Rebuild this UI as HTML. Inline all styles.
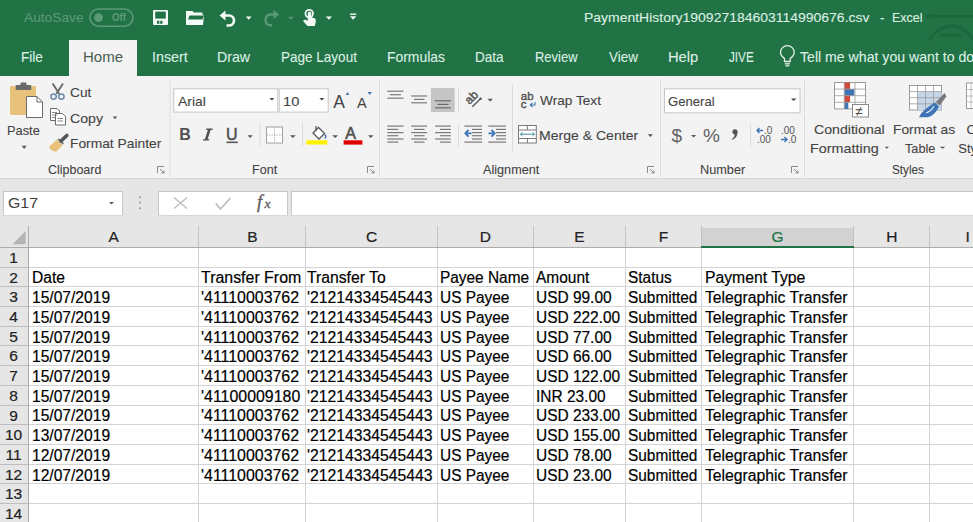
<!DOCTYPE html>
<html><head><meta charset="utf-8">
<style>
html,body{margin:0;padding:0;}
body{width:973px;height:522px;overflow:hidden;position:relative;background:#217346;font-family:"Liberation Sans",sans-serif;}
.a{position:absolute;}
.c{-webkit-text-stroke:0.2px currentColor;}
.r{-webkit-text-stroke:0.1px currentColor;}
.t{position:absolute;white-space:pre;line-height:1;transform-origin:0 0;font-family:"Liberation Sans",sans-serif;}
svg{position:absolute;left:0;top:0;overflow:visible;}
</style></head><body>
<!-- title + tabs green -->
<div class="a" style="left:0;top:0;width:973px;height:76px;background:#217346"></div>
<!-- home tab -->
<div class="a" style="left:69px;top:40px;width:68px;height:36px;background:#f3f3f3"></div>
<!-- ribbon -->
<div class="a" style="left:0;top:76px;width:973px;height:102.5px;background:#f3f3f3"></div>
<div class="a" style="left:0;top:178px;width:973px;height:1px;background:#d6d6d6"></div>
<!-- formula band -->
<div class="a" style="left:0;top:179px;width:973px;height:45px;background:#e6e6e6"></div>
<div class="a" style="left:3px;top:191px;width:117.6px;height:22.5px;background:#fff;border:1px solid #c6c6c6"></div>
<div class="a" style="left:158px;top:191px;width:127.5px;height:22.5px;background:#fff;border:1px solid #c6c6c6"></div>
<div class="a" style="left:291px;top:191px;width:700px;height:22.5px;background:#fff;border:1px solid #c6c6c6"></div>

<svg width="973" height="522" viewBox="0 0 973 522">
<rect x="0" y="215.5" width="973" height="32" fill="#e6e6e6"/>
<rect x="0" y="247.4" width="28.4" height="300" fill="#e6e6e6"/>
<rect x="28.9" y="248" width="973" height="300" fill="#ffffff"/>
<rect x="701.5" y="228" width="152" height="19" fill="#d2d2d2"/>
<line x1="28.4" y1="267.50" x2="973" y2="267.50" stroke="#d4d4d4" stroke-width="1"/>
<line x1="0" y1="267.50" x2="28" y2="267.50" stroke="#bebebe" stroke-width="1"/>
<line x1="28.4" y1="286.50" x2="973" y2="286.50" stroke="#d4d4d4" stroke-width="1"/>
<line x1="0" y1="286.50" x2="28" y2="286.50" stroke="#bebebe" stroke-width="1"/>
<line x1="28.4" y1="306.50" x2="973" y2="306.50" stroke="#d4d4d4" stroke-width="1"/>
<line x1="0" y1="306.50" x2="28" y2="306.50" stroke="#bebebe" stroke-width="1"/>
<line x1="28.4" y1="326.50" x2="973" y2="326.50" stroke="#d4d4d4" stroke-width="1"/>
<line x1="0" y1="326.50" x2="28" y2="326.50" stroke="#bebebe" stroke-width="1"/>
<line x1="28.4" y1="345.50" x2="973" y2="345.50" stroke="#d4d4d4" stroke-width="1"/>
<line x1="0" y1="345.50" x2="28" y2="345.50" stroke="#bebebe" stroke-width="1"/>
<line x1="28.4" y1="365.50" x2="973" y2="365.50" stroke="#d4d4d4" stroke-width="1"/>
<line x1="0" y1="365.50" x2="28" y2="365.50" stroke="#bebebe" stroke-width="1"/>
<line x1="28.4" y1="385.50" x2="973" y2="385.50" stroke="#d4d4d4" stroke-width="1"/>
<line x1="0" y1="385.50" x2="28" y2="385.50" stroke="#bebebe" stroke-width="1"/>
<line x1="28.4" y1="405.50" x2="973" y2="405.50" stroke="#d4d4d4" stroke-width="1"/>
<line x1="0" y1="405.50" x2="28" y2="405.50" stroke="#bebebe" stroke-width="1"/>
<line x1="28.4" y1="424.50" x2="973" y2="424.50" stroke="#d4d4d4" stroke-width="1"/>
<line x1="0" y1="424.50" x2="28" y2="424.50" stroke="#bebebe" stroke-width="1"/>
<line x1="28.4" y1="444.50" x2="973" y2="444.50" stroke="#d4d4d4" stroke-width="1"/>
<line x1="0" y1="444.50" x2="28" y2="444.50" stroke="#bebebe" stroke-width="1"/>
<line x1="28.4" y1="464.50" x2="973" y2="464.50" stroke="#d4d4d4" stroke-width="1"/>
<line x1="0" y1="464.50" x2="28" y2="464.50" stroke="#bebebe" stroke-width="1"/>
<line x1="28.4" y1="483.50" x2="973" y2="483.50" stroke="#d4d4d4" stroke-width="1"/>
<line x1="0" y1="483.50" x2="28" y2="483.50" stroke="#bebebe" stroke-width="1"/>
<line x1="28.4" y1="503.50" x2="973" y2="503.50" stroke="#d4d4d4" stroke-width="1"/>
<line x1="0" y1="503.50" x2="28" y2="503.50" stroke="#bebebe" stroke-width="1"/>
<line x1="28.4" y1="523.50" x2="973" y2="523.50" stroke="#d4d4d4" stroke-width="1"/>
<line x1="0" y1="523.50" x2="28" y2="523.50" stroke="#bebebe" stroke-width="1"/>
<line x1="198.50" y1="247.4" x2="198.50" y2="522" stroke="#d4d4d4" stroke-width="1"/>
<line x1="198.50" y1="226" x2="198.50" y2="247.4" stroke="#c3c3c3" stroke-width="1"/>
<line x1="305.50" y1="247.4" x2="305.50" y2="522" stroke="#d4d4d4" stroke-width="1"/>
<line x1="305.50" y1="226" x2="305.50" y2="247.4" stroke="#c3c3c3" stroke-width="1"/>
<line x1="437.50" y1="247.4" x2="437.50" y2="522" stroke="#d4d4d4" stroke-width="1"/>
<line x1="437.50" y1="226" x2="437.50" y2="247.4" stroke="#c3c3c3" stroke-width="1"/>
<line x1="533.50" y1="247.4" x2="533.50" y2="522" stroke="#d4d4d4" stroke-width="1"/>
<line x1="533.50" y1="226" x2="533.50" y2="247.4" stroke="#c3c3c3" stroke-width="1"/>
<line x1="625.50" y1="247.4" x2="625.50" y2="522" stroke="#d4d4d4" stroke-width="1"/>
<line x1="625.50" y1="226" x2="625.50" y2="247.4" stroke="#c3c3c3" stroke-width="1"/>
<line x1="701.50" y1="247.4" x2="701.50" y2="522" stroke="#d4d4d4" stroke-width="1"/>
<line x1="701.50" y1="226" x2="701.50" y2="247.4" stroke="#c3c3c3" stroke-width="1"/>
<line x1="853.50" y1="247.4" x2="853.50" y2="522" stroke="#d4d4d4" stroke-width="1"/>
<line x1="853.50" y1="226" x2="853.50" y2="247.4" stroke="#c3c3c3" stroke-width="1"/>
<line x1="929.50" y1="247.4" x2="929.50" y2="522" stroke="#d4d4d4" stroke-width="1"/>
<line x1="929.50" y1="226" x2="929.50" y2="247.4" stroke="#c3c3c3" stroke-width="1"/>
<line x1="0" y1="247.5" x2="973" y2="247.5" stroke="#ababab" stroke-width="1"/>
<line x1="28.5" y1="226" x2="28.5" y2="522" stroke="#ababab" stroke-width="1"/>
<line x1="701" y1="247" x2="854" y2="247" stroke="#217346" stroke-width="2"/>
<polygon points="25.7,231 25.7,244.2 12.5,244.2" fill="#b4b4b4"/>
</svg>

<!-- ICONS -->
<svg width="973" height="522" viewBox="0 0 973 522">
<!-- title bar decorative -->
<g stroke="#1b673c" fill="none" opacity="0.9">
  <line x1="930" y1="16.5" x2="980" y2="16.5" stroke-width="3"/>
  <circle cx="929.5" cy="16.5" r="2.8" fill="#1b673c" stroke="none"/>
  <path d="M929 40 Q951 12 975 40" stroke-width="3.2"/>
  <path d="M940 35.3 H961" stroke-width="3.5"/>
</g>
<!-- autosave toggle -->
<rect x="89.9" y="9" width="43" height="17.2" rx="8.6" fill="none" stroke="#5e9a78" stroke-width="1.6"/>
<circle cx="98.6" cy="17.6" r="4.4" fill="#5e9a78"/>
<!-- save -->
<rect x="153" y="10" width="15" height="15" rx="1" fill="#f4faf6"/>
<rect x="155.2" y="11.6" width="10.6" height="7" fill="#217346"/>
<rect x="157" y="20.8" width="5.5" height="3" fill="#217346"/>
<rect x="159.3" y="20.8" width="0.9" height="3" fill="#f4faf6"/>
<!-- folder -->
<path d="M186 11 H192.5 L194 12.5 H202.5 V15 H204 L203 25 H186 Z" fill="#f4faf6"/>
<polygon points="189.5,15.6 204,15.6 202.5,19.6 188,19.6" fill="#217346"/>
<!-- undo -->
<g fill="none" stroke="#f4faf6" stroke-width="2.6">
  <path d="M222 15.5 H229 A5 5 0 0 1 229 25.5 H226.5"/>
</g>
<polygon points="219.5,15.5 225.5,10.5 225.5,20.5" fill="#f4faf6"/>
<polygon points="245.8,16.6 251.6,16.6 248.7,19.7" fill="#f4faf6"/>
<!-- redo faded -->
<g fill="none" stroke="#5a9874" stroke-width="2.4">
  <path d="M276 14.5 H270 A5.5 5.5 0 0 0 270 25.3 H272"/>
</g>
<polygon points="279.2,14.5 273.5,10 273.5,19" fill="#5a9874"/>
<polygon points="288,16.8 293.8,16.8 290.9,19.7" fill="#5a9874"/>
<!-- touch mode -->
<g fill="#f4faf6">
  <circle cx="309.2" cy="13.6" r="3.8" fill="none" stroke="#f4faf6" stroke-width="1.7"/>
  <path d="M307.8 12.5 Q309.5 11 311.2 12.5 V17.5 L314 18 Q316.2 18.6 315.8 21.5 L314.8 26 H307.5 L303.2 21.2 Q303.3 19.2 305.6 19.8 L307.8 21 Z"/>
</g>
<polygon points="325.8,16.6 332,16.6 328.9,19.7" fill="#f4faf6"/>
<rect x="350" y="13.5" width="6.3" height="1.4" fill="#f4faf6"/>
<polygon points="350,16.3 356.3,16.3 353.15,19.7" fill="#f4faf6"/>

<!-- lightbulb -->
<g fill="none" stroke="#e4efe8" stroke-width="1.3">
  <path d="M784.5 61.5 V58.5 Q780.5 55.5 780.5 52.5 A6.8 6.8 0 0 1 794.2 52.5 Q794.2 55.5 790.2 58.5 V61.5 Z"/>
  <line x1="784.8" y1="63.8" x2="790" y2="63.8"/>
  <line x1="785.5" y1="65.8" x2="789.3" y2="65.8"/>
</g>

<!-- group separators -->
<g fill="#dcdcdc">
  <rect x="169.5" y="79" width="1" height="98"/>
  <rect x="379" y="79" width="1" height="98"/>
  <rect x="660" y="79" width="1" height="98"/>
  <rect x="804" y="79" width="1" height="98"/>
</g>
<!-- dialog launchers -->
<g fill="none" stroke="#8a8a8a" stroke-width="1">
  <path d="M157.5 173 V166.5 H164"/><path d="M160 169 L164 173 M164 170.5 V173 H161.5"/>
  <path d="M367.5 173 V166.5 H374"/><path d="M370 169 L374 173 M374 170.5 V173 H371.5"/>
  <path d="M647.5 173 V166.5 H654"/><path d="M650 169 L654 173 M654 170.5 V173 H651.5"/>
  <path d="M791.5 173 V166.5 H798"/><path d="M794 169 L798 173 M798 170.5 V173 H795.5"/>
</g>

<!-- paste -->
<rect x="10" y="86" width="26" height="29" rx="1" fill="#e8c17a"/>
<rect x="15.7" y="85" width="15.5" height="5" fill="#6b6b6b"/>
<rect x="20.5" y="82.5" width="6" height="4" rx="1" fill="#6b6b6b"/>
<path d="M26.5 96.5 H37 L42.5 102 V117.5 H26.5 Z" fill="#fff" stroke="#6b6b6b" stroke-width="1"/>
<path d="M37 96.5 V102 H42.5" fill="none" stroke="#6b6b6b" stroke-width="1"/>
<polygon points="21.7,145.8 26.6,145.8 24.15,149" fill="#555"/>
<!-- scissors -->
<g fill="none">
  <path d="M52.6 83.5 L59.2 93.8 M63 83.5 L56.4 93.8" stroke="#666" stroke-width="1.8"/>
  <circle cx="53.6" cy="96.6" r="2.7" stroke="#6a88aa" stroke-width="1.5"/><circle cx="61.4" cy="96.6" r="2.7" stroke="#6a88aa" stroke-width="1.5"/>
</g>
<!-- copy -->
<g fill="#fff" stroke="#6b6b6b" stroke-width="1">
  <path d="M50.5 108.5 H57 L59.5 111 V120.5 H50.5 Z"/>
  <path d="M55.5 113.5 H62.5 L65.5 116.5 V125 H55.5 Z"/>
  <path d="M52 112.5 H57 M52 115 H57 M52 117.5 H55 M57.5 118.5 H63 M57.5 121 H63" stroke-width="0.8"/>
</g>
<polygon points="112.7,116.6 117.2,116.6 114.95,119.3" fill="#555"/>
<!-- format painter -->
<path d="M56.8 139.8 L62.5 145.5 L56 151.8 Q52 151 49.5 148.5 Q49 146.5 50 145.8 Z" fill="#e8c17a"/>
<path d="M57.5 139.5 L62.8 144.8 L64 143.3 L58.8 138.2 Z" fill="#777"/>
<path d="M61 141 L66.8 135.5" stroke="#555" stroke-width="3.6" stroke-linecap="round"/>

<!-- font combos -->
<rect x="173.8" y="88.8" width="104" height="23.3" fill="#fff" stroke="#c6c6c6" stroke-width="1"/>
<rect x="279.2" y="88.8" width="49" height="23.3" fill="#fff" stroke="#c6c6c6" stroke-width="1"/>
<polygon points="269.5,98 274.3,98 271.9,100.6" fill="#444"/>
<polygon points="319.4,98 324.3,98 321.85,100.6" fill="#444"/>
<!-- grow / shrink font -->
<text x="333.2" y="107.8" font-size="17.5" fill="#444" font-family="Liberation Sans">A</text>
<polygon points="345.5,95 349.5,95 347.5,92" fill="#4a7bb0"/>
<text x="357" y="107.8" font-size="14.5" fill="#444" font-family="Liberation Sans">A</text>
<polygon points="367.5,92 372,92 369.75,95" fill="#4a7bb0"/>
<!-- B I U -->
<text x="179.3" y="140.4" font-size="16" font-weight="bold" fill="#505050" font-family="Liberation Sans">B</text>
<path d="M206.5 128.6 H212.8 L212.4 130 H210.6 L207.6 139.3 H209.4 L209 140.6 H202.7 L203.1 139.3 H204.9 L207.9 130 H206.1 Z" fill="#505050"/>
<text x="226" y="139.8" font-size="16" fill="#505050" font-family="Liberation Sans" stroke="#505050" stroke-width="0.5">U</text>
<rect x="226.5" y="141.6" width="11.3" height="1.5" fill="#505050"/>
<polygon points="247.5,135.2 252.7,135.2 250.1,138" fill="#555"/>
<rect x="259.3" y="123.6" width="1" height="22.5" fill="#dadada"/>
<!-- borders -->
<rect x="266.5" y="127" width="16" height="16" fill="#fff" stroke="#a0a0a0" stroke-width="1"/>
<path d="M274.5 127 V143 M266.5 135 H282.5" stroke="#b0b0b0" stroke-width="1" stroke-dasharray="1.5 1"/>
<polygon points="290,135.2 295.7,135.2 292.85,138" fill="#555"/>
<rect x="302" y="123.6" width="1" height="22.5" fill="#dadada"/>
<!-- fill color -->
<path d="M313 133 L318.5 127.5 L324.5 133.5 L319 139 Z" fill="#fff" stroke="#555" stroke-width="1.3"/>
<path d="M316 126 V131" stroke="#555" stroke-width="1.3"/>
<path d="M325 134.5 Q326.5 137 325 138.5" stroke="#4a7bb0" stroke-width="1.5" fill="none"/>
<rect x="306.3" y="140.3" width="21" height="4.2" fill="#fff200"/>
<polygon points="332.3,135.2 338,135.2 335.15,138" fill="#555"/>
<!-- font color -->
<text x="345.3" y="139" font-size="16" fill="#505050" font-family="Liberation Sans" stroke="#505050" stroke-width="0.6">A</text>
<rect x="343.6" y="140.3" width="18.8" height="4.3" fill="#e00000"/>
<polygon points="368,135.2 373.5,135.2 370.75,138" fill="#555"/>

<!-- alignment row 1 -->
<g fill="#7a7a7a">
  <rect x="387.3" y="90.6" width="16.2" height="1.2"/><rect x="390" y="94.1" width="11" height="1.2"/><rect x="387.3" y="97.6" width="16.2" height="1.2"/>
  <rect x="411.2" y="95.4" width="15.9" height="1.2"/><rect x="414" y="98.8" width="10.5" height="1.2"/><rect x="411.2" y="102.2" width="15.9" height="1.2"/>
</g>
<rect x="430.8" y="88" width="23.9" height="24" fill="#c5c5c5"/>
<g fill="#6a6a6a">
  <rect x="435" y="100.2" width="15.8" height="1.2"/><rect x="437.5" y="103.8" width="11" height="1.2"/><rect x="435" y="107.2" width="15.8" height="1.2"/>
</g>
<rect x="458" y="88" width="1" height="24" fill="#dadada"/>
<g>
  <text x="0" y="0" font-size="12" fill="#555" font-family="Liberation Sans" stroke="#555" stroke-width="0.45" transform="translate(469.5,105) rotate(-45)">ab</text>
  <path d="M472.3 106.8 L480 99.2" stroke="#555" stroke-width="1.3"/>
  <circle cx="480.6" cy="98.8" r="1.3" fill="#555"/>
</g>
<polygon points="487.5,98.8 493,98.8 490.25,101.6" fill="#555"/>
<rect x="512" y="84.6" width="1" height="66.5" fill="#dadada"/>
<!-- alignment row 2 -->
<g fill="#7a7a7a">
  <rect x="387.3" y="125.5" width="16.2" height="1.2"/><rect x="387.3" y="128.8" width="11" height="1.2"/><rect x="387.3" y="132" width="16.2" height="1.2"/><rect x="387.3" y="135.1" width="11" height="1.2"/><rect x="387.3" y="138.4" width="16.2" height="1.2"/><rect x="387.3" y="141.5" width="11" height="1.2"/>
  <rect x="411.2" y="125.5" width="15.9" height="1.2"/><rect x="414" y="128.8" width="10.5" height="1.2"/><rect x="411.2" y="132" width="15.9" height="1.2"/><rect x="414" y="135.1" width="10.5" height="1.2"/><rect x="411.2" y="138.4" width="15.9" height="1.2"/><rect x="414" y="141.5" width="10.5" height="1.2"/>
  <rect x="435.1" y="125.5" width="15.7" height="1.2"/><rect x="440" y="128.8" width="10.8" height="1.2"/><rect x="435.1" y="132" width="15.7" height="1.2"/><rect x="440" y="135.1" width="10.8" height="1.2"/><rect x="435.1" y="138.4" width="15.7" height="1.2"/><rect x="440" y="141.5" width="10.8" height="1.2"/>
</g>
<rect x="458" y="124.7" width="1" height="21.6" fill="#dadada"/>
<g fill="#7a7a7a">
  <rect x="464.4" y="125.5" width="17.7" height="1.2"/><rect x="472" y="128.8" width="10" height="1.2"/><rect x="472" y="132" width="10" height="1.2"/><rect x="472" y="135.1" width="10" height="1.2"/><rect x="472" y="138.4" width="10" height="1.2"/><rect x="464.4" y="141.5" width="17.7" height="1.2"/>
  <rect x="488.3" y="125.5" width="17.7" height="1.2"/><rect x="496" y="128.8" width="10" height="1.2"/><rect x="496" y="132" width="10" height="1.2"/><rect x="496" y="135.1" width="10" height="1.2"/><rect x="496" y="138.4" width="10" height="1.2"/><rect x="488.3" y="141.5" width="17.7" height="1.2"/>
</g>
<g fill="none" stroke="#3f74b5" stroke-width="1.8">
  <path d="M465.5 133.3 H471.5 M468.5 130 L465.3 133.3 L468.5 136.6"/>
  <path d="M488.5 133.3 H494.5 M491.5 130 L494.7 133.3 L491.5 136.6"/>
</g>
<!-- wrap text icon -->
<text x="520.8" y="100" font-size="11.5" fill="#555" font-family="Liberation Sans" stroke="#555" stroke-width="0.4">ab</text>
<text x="520.8" y="107.8" font-size="11.5" fill="#555" font-family="Liberation Sans" stroke="#555" stroke-width="0.4">c</text>
<path d="M535 102 V105 H530.5 M532.5 103 L530.3 105 L532.5 107" fill="none" stroke="#4a7bb0" stroke-width="1.2"/>
<!-- merge icon -->
<rect x="518.5" y="125.5" width="17.8" height="17.5" fill="#fff" stroke="#7a7a7a" stroke-width="1"/>
<path d="M518.5 130 H536.3 M518.5 138.5 H536.3 M527.4 125.5 V130 M527.4 138.5 V143" stroke="#7a7a7a" stroke-width="1"/>
<path d="M520.5 134.2 H534.5 M522.5 132.5 L520.5 134.2 L522.5 136 M532.5 132.5 L534.5 134.2 L532.5 136" fill="none" stroke="#3f8a9a" stroke-width="1"/>
<polygon points="647.7,134.2 652.9,134.2 650.3,136.9" fill="#555"/>

<!-- number group -->
<rect x="664.5" y="88.8" width="135.5" height="24" fill="#fff" stroke="#c6c6c6" stroke-width="1"/>
<polygon points="791,98.5 796.4,98.5 793.7,101" fill="#444"/>
<text x="671.5" y="141.5" font-size="19" fill="#606060" font-family="Liberation Sans">$</text>
<polygon points="691,135 696.2,135 693.6,137.6" fill="#555"/>
<text x="703" y="142.3" font-size="19" fill="#606060" font-family="Liberation Sans">%</text>
<circle cx="735" cy="131.8" r="2.6" fill="#555"/><path d="M737.3 132 Q737.8 137.5 732.2 139.8 L731.8 139 Q734.8 137 734.8 133.5 Z" fill="#555"/>
<rect x="750" y="124" width="1" height="23" fill="#dadada"/>
<text x="764" y="133.6" font-size="10" fill="#555" font-family="Liberation Sans">.0</text>
<text x="757" y="143.2" font-size="10" fill="#555" font-family="Liberation Sans">.00</text>
<path d="M757 130.5 H763 M759.5 128 L757 130.5 L759.5 133" fill="none" stroke="#3f74b5" stroke-width="1.4"/>
<text x="781" y="133.6" font-size="10" fill="#555" font-family="Liberation Sans">.00</text>
<text x="788" y="143.2" font-size="10" fill="#555" font-family="Liberation Sans">.0</text>
<path d="M781 139.5 H787 M784.5 137 L787 139.5 L784.5 142" fill="none" stroke="#3f74b5" stroke-width="1.4"/>

<!-- conditional formatting -->
<g>
  <rect x="834.5" y="82.5" width="31" height="26.4" fill="#fff" stroke="#9a9a9a" stroke-width="1"/>
  <rect x="844.3" y="82.5" width="5.8" height="6.6" fill="#d04a3a"/>
  <rect x="844.3" y="89.1" width="10" height="6.6" fill="#3f74b5"/>
  <rect x="844.3" y="95.7" width="5.8" height="6.6" fill="#d04a3a"/>
  <rect x="844.3" y="102.3" width="4" height="6.6" fill="#3f74b5"/>
  <path d="M834.5 89.1 H865.5 M834.5 95.7 H865.5 M834.5 102.3 H865.5 M844.3 82.5 V108.9 M855 82.5 V108.9" stroke="#9a9a9a" stroke-width="0.8" fill="none"/>
  <rect x="852.5" y="104.5" width="16" height="12.5" fill="#fff" stroke="#8a8a8a" stroke-width="1"/>
  <text x="855.2" y="115.5" font-size="13.5" fill="#444" font-family="Liberation Sans">≠</text>
</g>
<polygon points="884.7,146.8 889,146.8 886.85,148.7" fill="#555"/>
<!-- format as table -->
<g>
  <rect x="909.5" y="85.5" width="32" height="24.5" fill="#fff" stroke="#9a9a9a" stroke-width="1"/>
  <rect x="917.5" y="91.6" width="24" height="18.4" fill="#c6d7ea"/>
  <path d="M909.5 91.6 H941.5 M909.5 97.7 H941.5 M909.5 103.8 H941.5 M917.5 85.5 V110 M925.5 85.5 V110 M933.5 85.5 V110" stroke="#9a9a9a" stroke-width="0.8" fill="none"/>
  <path d="M944.5 93 L936 102 L939.5 105.5 L946.5 96.5 Z" fill="#7a7a7a"/>
  <path d="M935 102.5 L939 106.5 Q935.5 115 928 117.2 L919 117.2 Q922 110 935 102.5 Z" fill="#3f74b5"/>
  <path d="M934 106 Q931.5 111 926 113" stroke="#dfe8f3" stroke-width="1.2" fill="none"/>
</g>
<polygon points="939.8,146.8 945.3,146.8 942.55,148.8" fill="#555"/>
<!-- cell styles partial -->
<rect x="966.5" y="83" width="12" height="25.5" fill="#fff" stroke="#9a9a9a" stroke-width="1"/>
<path d="M966.5 89.5 H973 M966.5 96 H973 M966.5 102 H973 M971 83 V108.5" stroke="#b0b0b0" stroke-width="0.8"/>

<!-- formula bar bits -->
<polygon points="109,202 114,202 111.5,204.6" fill="#555"/>
<g fill="#9a9a9a"><circle cx="140" cy="197.2" r="1"/><circle cx="140" cy="202.6" r="1"/><circle cx="140" cy="208.2" r="1"/></g>
<path d="M174 197.5 L187 208.5 M187 197.5 L174 208.5" stroke="#bdbdbd" stroke-width="1.4"/>
<path d="M215.8 203.5 L220.5 209 L230.5 198" stroke="#bdbdbd" stroke-width="1.8" fill="none"/>
<text x="257" y="207.5" font-size="18.5" font-style="italic" fill="#5a5a5a" font-family="Liberation Serif" stroke="#5a5a5a" stroke-width="0.3">f</text>
<text x="264.5" y="207.5" font-size="13.5" font-style="italic" fill="#5a5a5a" font-family="Liberation Serif" stroke="#5a5a5a" stroke-width="0.3">x</text>
</svg>

<span class="t" style="left:24.20px;top:11.27px;font-size:13.5px;color:#5e9a78;transform:scaleX(1.0172);">AutoSave</span>
<span class="t" style="left:112.00px;top:12.93px;font-size:10px;color:#5e9a78;transform:scaleX(0.9733);font-weight:700;">Off</span>
<span class="t r" style="left:584.23px;top:11.30px;font-size:13px;color:#ddefe3;transform:scaleX(1.0743);">PaymentHistory190927184603114990676.csv</span>
<span class="t r" style="left:880.00px;top:11.30px;font-size:13px;color:#ddefe3;">-</span>
<span class="t r" style="left:892.24px;top:11.30px;font-size:13px;color:#ddefe3;transform:scaleX(0.9600);">Excel</span>
<span class="t r" style="left:21.26px;top:50.03px;font-size:14.5px;color:#ddefe3;transform:scaleX(0.9364);">File</span>
<span class="t r" style="left:152.01px;top:50.03px;font-size:14.5px;color:#ddefe3;transform:scaleX(0.9857);">Insert</span>
<span class="t r" style="left:217.32px;top:50.03px;font-size:14.5px;color:#ddefe3;transform:scaleX(0.9758);">Draw</span>
<span class="t r" style="left:280.57px;top:50.03px;font-size:14.5px;color:#ddefe3;transform:scaleX(0.9321);">Page Layout</span>
<span class="t r" style="left:387.24px;top:50.03px;font-size:14.5px;color:#ddefe3;transform:scaleX(0.9593);">Formulas</span>
<span class="t r" style="left:475.47px;top:50.03px;font-size:14.5px;color:#ddefe3;transform:scaleX(0.9333);">Data</span>
<span class="t r" style="left:535.41px;top:50.03px;font-size:14.5px;color:#ddefe3;transform:scaleX(0.8936);">Review</span>
<span class="t r" style="left:609.20px;top:50.03px;font-size:14.5px;color:#ddefe3;transform:scaleX(0.9258);">View</span>
<span class="t r" style="left:668.09px;top:50.03px;font-size:14.5px;color:#ddefe3;transform:scaleX(1.0143);">Help</span>
<span class="t r" style="left:728.70px;top:50.03px;font-size:14.5px;color:#ddefe3;transform:scaleX(0.8067);">JIVE</span>
<span class="t" style="left:82.86px;top:50.03px;font-size:14.5px;color:#4a5e52;transform:scaleX(1.0378);">Home</span>
<span class="t r" style="left:800.00px;top:49.93px;font-size:14.5px;color:#ddefe3;transform:scaleX(0.9730);">Tell me what you want to do</span>
<span class="t r" style="left:6.61px;top:123.70px;font-size:13px;color:#444444;transform:scaleX(0.9875);">Paste</span>
<span class="t r" style="left:70.40px;top:85.70px;font-size:13px;color:#444444;transform:scaleX(1.0550);">Cut</span>
<span class="t r" style="left:70.40px;top:111.90px;font-size:13px;color:#444444;transform:scaleX(1.0867);">Copy</span>
<span class="t r" style="left:69.74px;top:137.40px;font-size:13px;color:#444444;transform:scaleX(1.0612);">Format Painter</span>
<span class="t r" style="left:47.90px;top:162.60px;font-size:13px;color:#444444;transform:scaleX(0.9582);">Clipboard</span>
<span class="t r" style="left:177.90px;top:95.20px;font-size:13px;color:#444444;transform:scaleX(1.0680);">Arial</span>
<span class="t r" style="left:282.57px;top:95.20px;font-size:13px;color:#444444;transform:scaleX(1.1308);">10</span>
<span class="t r" style="left:252.23px;top:162.80px;font-size:13px;color:#444444;transform:scaleX(0.9680);">Font</span>
<span class="t r" style="left:539.90px;top:93.90px;font-size:13px;color:#444444;transform:scaleX(1.0500);">Wrap Text</span>
<span class="t r" style="left:539.32px;top:128.80px;font-size:13px;color:#444444;transform:scaleX(1.0802);">Merge &amp; Center</span>
<span class="t r" style="left:482.50px;top:162.80px;font-size:13px;color:#444444;transform:scaleX(0.9741);">Alignment</span>
<span class="t r" style="left:668.00px;top:94.90px;font-size:13px;color:#444444;transform:scaleX(1.0087);">General</span>
<span class="t r" style="left:700.02px;top:162.50px;font-size:13px;color:#444444;transform:scaleX(0.9778);">Number</span>
<span class="t r" style="left:814.40px;top:123.00px;font-size:13px;color:#444444;transform:scaleX(1.0877);">Conditional</span>
<span class="t r" style="left:809.80px;top:142.20px;font-size:13px;color:#444444;transform:scaleX(1.1049);">Formatting</span>
<span class="t r" style="left:893.44px;top:123.00px;font-size:13px;color:#444444;transform:scaleX(1.0614);">Format as</span>
<span class="t r" style="left:904.60px;top:142.20px;font-size:13px;color:#444444;transform:scaleX(0.9774);">Table</span>
<span class="t r" style="left:891.60px;top:162.70px;font-size:13px;color:#444444;transform:scaleX(0.9029);">Styles</span>
<span class="t r" style="left:966.50px;top:123.00px;font-size:13px;color:#444444;">C</span>
<span class="t r" style="left:958.30px;top:142.20px;font-size:13px;color:#444444;">Sty</span>
<span class="t" style="left:7.74px;top:195.30px;font-size:15px;color:#404040;transform:scaleX(1.0593);">G17</span>
<span class="t c" style="left:31.90px;top:270.38px;font-size:16px;color:#000;transform:scaleX(0.9750);">Date</span>
<span class="t c" style="left:200.80px;top:270.38px;font-size:16px;color:#000;transform:scaleX(0.9950);">Transfer From</span>
<span class="t c" style="left:307.20px;top:270.38px;font-size:16px;color:#000;transform:scaleX(0.9830);">Transfer To</span>
<span class="t c" style="left:440.00px;top:270.38px;font-size:16px;color:#000;transform:scaleX(0.9630);">Payee Name</span>
<span class="t c" style="left:535.90px;top:270.38px;font-size:16px;color:#000;transform:scaleX(0.9660);">Amount</span>
<span class="t c" style="left:627.90px;top:270.38px;font-size:16px;color:#000;transform:scaleX(0.9630);">Status</span>
<span class="t c" style="left:704.80px;top:270.38px;font-size:16px;color:#000;transform:scaleX(0.9830);">Payment Type</span>
<span class="t c" style="left:31.90px;top:290.10px;font-size:16px;color:#000;transform:scaleX(0.9750);">15/07/2019</span>
<span class="t c" style="left:200.80px;top:290.10px;font-size:16px;color:#000;transform:scaleX(0.9950);">'41110003762</span>
<span class="t c" style="left:307.20px;top:290.10px;font-size:16px;color:#000;transform:scaleX(0.9830);">'21214334545443</span>
<span class="t c" style="left:440.00px;top:290.10px;font-size:16px;color:#000;transform:scaleX(0.9630);">US Payee</span>
<span class="t c" style="left:535.90px;top:290.10px;font-size:16px;color:#000;transform:scaleX(0.9660);">USD 99.00</span>
<span class="t c" style="left:627.90px;top:290.10px;font-size:16px;color:#000;transform:scaleX(0.9630);">Submitted</span>
<span class="t c" style="left:704.80px;top:290.10px;font-size:16px;color:#000;transform:scaleX(0.9830);">Telegraphic Transfer</span>
<span class="t c" style="left:31.90px;top:309.82px;font-size:16px;color:#000;transform:scaleX(0.9750);">15/07/2019</span>
<span class="t c" style="left:200.80px;top:309.82px;font-size:16px;color:#000;transform:scaleX(0.9950);">'41110003762</span>
<span class="t c" style="left:307.20px;top:309.82px;font-size:16px;color:#000;transform:scaleX(0.9830);">'21214334545443</span>
<span class="t c" style="left:440.00px;top:309.82px;font-size:16px;color:#000;transform:scaleX(0.9630);">US Payee</span>
<span class="t c" style="left:535.90px;top:309.82px;font-size:16px;color:#000;transform:scaleX(0.9660);">USD 222.00</span>
<span class="t c" style="left:627.90px;top:309.82px;font-size:16px;color:#000;transform:scaleX(0.9630);">Submitted</span>
<span class="t c" style="left:704.80px;top:309.82px;font-size:16px;color:#000;transform:scaleX(0.9830);">Telegraphic Transfer</span>
<span class="t c" style="left:31.90px;top:329.54px;font-size:16px;color:#000;transform:scaleX(0.9750);">15/07/2019</span>
<span class="t c" style="left:200.80px;top:329.54px;font-size:16px;color:#000;transform:scaleX(0.9950);">'41110003762</span>
<span class="t c" style="left:307.20px;top:329.54px;font-size:16px;color:#000;transform:scaleX(0.9830);">'21214334545443</span>
<span class="t c" style="left:440.00px;top:329.54px;font-size:16px;color:#000;transform:scaleX(0.9630);">US Payee</span>
<span class="t c" style="left:535.90px;top:329.54px;font-size:16px;color:#000;transform:scaleX(0.9660);">USD 77.00</span>
<span class="t c" style="left:627.90px;top:329.54px;font-size:16px;color:#000;transform:scaleX(0.9630);">Submitted</span>
<span class="t c" style="left:704.80px;top:329.54px;font-size:16px;color:#000;transform:scaleX(0.9830);">Telegraphic Transfer</span>
<span class="t c" style="left:31.90px;top:349.26px;font-size:16px;color:#000;transform:scaleX(0.9750);">15/07/2019</span>
<span class="t c" style="left:200.80px;top:349.26px;font-size:16px;color:#000;transform:scaleX(0.9950);">'41110003762</span>
<span class="t c" style="left:307.20px;top:349.26px;font-size:16px;color:#000;transform:scaleX(0.9830);">'21214334545443</span>
<span class="t c" style="left:440.00px;top:349.26px;font-size:16px;color:#000;transform:scaleX(0.9630);">US Payee</span>
<span class="t c" style="left:535.90px;top:349.26px;font-size:16px;color:#000;transform:scaleX(0.9660);">USD 66.00</span>
<span class="t c" style="left:627.90px;top:349.26px;font-size:16px;color:#000;transform:scaleX(0.9630);">Submitted</span>
<span class="t c" style="left:704.80px;top:349.26px;font-size:16px;color:#000;transform:scaleX(0.9830);">Telegraphic Transfer</span>
<span class="t c" style="left:31.90px;top:368.98px;font-size:16px;color:#000;transform:scaleX(0.9750);">15/07/2019</span>
<span class="t c" style="left:200.80px;top:368.98px;font-size:16px;color:#000;transform:scaleX(0.9950);">'41110003762</span>
<span class="t c" style="left:307.20px;top:368.98px;font-size:16px;color:#000;transform:scaleX(0.9830);">'21214334545443</span>
<span class="t c" style="left:440.00px;top:368.98px;font-size:16px;color:#000;transform:scaleX(0.9630);">US Payee</span>
<span class="t c" style="left:535.90px;top:368.98px;font-size:16px;color:#000;transform:scaleX(0.9660);">USD 122.00</span>
<span class="t c" style="left:627.90px;top:368.98px;font-size:16px;color:#000;transform:scaleX(0.9630);">Submitted</span>
<span class="t c" style="left:704.80px;top:368.98px;font-size:16px;color:#000;transform:scaleX(0.9830);">Telegraphic Transfer</span>
<span class="t c" style="left:31.90px;top:388.70px;font-size:16px;color:#000;transform:scaleX(0.9750);">15/07/2019</span>
<span class="t c" style="left:200.80px;top:388.70px;font-size:16px;color:#000;transform:scaleX(0.9950);">'41100009180</span>
<span class="t c" style="left:307.20px;top:388.70px;font-size:16px;color:#000;transform:scaleX(0.9830);">'21214334545443</span>
<span class="t c" style="left:440.00px;top:388.70px;font-size:16px;color:#000;transform:scaleX(0.9630);">US Payee</span>
<span class="t c" style="left:535.90px;top:388.70px;font-size:16px;color:#000;transform:scaleX(0.9660);">INR 23.00</span>
<span class="t c" style="left:627.90px;top:388.70px;font-size:16px;color:#000;transform:scaleX(0.9630);">Submitted</span>
<span class="t c" style="left:704.80px;top:388.70px;font-size:16px;color:#000;transform:scaleX(0.9830);">Telegraphic Transfer</span>
<span class="t c" style="left:31.90px;top:408.42px;font-size:16px;color:#000;transform:scaleX(0.9750);">15/07/2019</span>
<span class="t c" style="left:200.80px;top:408.42px;font-size:16px;color:#000;transform:scaleX(0.9950);">'41110003762</span>
<span class="t c" style="left:307.20px;top:408.42px;font-size:16px;color:#000;transform:scaleX(0.9830);">'21214334545443</span>
<span class="t c" style="left:440.00px;top:408.42px;font-size:16px;color:#000;transform:scaleX(0.9630);">US Payee</span>
<span class="t c" style="left:535.90px;top:408.42px;font-size:16px;color:#000;transform:scaleX(0.9660);">USD 233.00</span>
<span class="t c" style="left:627.90px;top:408.42px;font-size:16px;color:#000;transform:scaleX(0.9630);">Submitted</span>
<span class="t c" style="left:704.80px;top:408.42px;font-size:16px;color:#000;transform:scaleX(0.9830);">Telegraphic Transfer</span>
<span class="t c" style="left:31.90px;top:428.14px;font-size:16px;color:#000;transform:scaleX(0.9750);">13/07/2019</span>
<span class="t c" style="left:200.80px;top:428.14px;font-size:16px;color:#000;transform:scaleX(0.9950);">'41110003762</span>
<span class="t c" style="left:307.20px;top:428.14px;font-size:16px;color:#000;transform:scaleX(0.9830);">'21214334545443</span>
<span class="t c" style="left:440.00px;top:428.14px;font-size:16px;color:#000;transform:scaleX(0.9630);">US Payee</span>
<span class="t c" style="left:535.90px;top:428.14px;font-size:16px;color:#000;transform:scaleX(0.9660);">USD 155.00</span>
<span class="t c" style="left:627.90px;top:428.14px;font-size:16px;color:#000;transform:scaleX(0.9630);">Submitted</span>
<span class="t c" style="left:704.80px;top:428.14px;font-size:16px;color:#000;transform:scaleX(0.9830);">Telegraphic Transfer</span>
<span class="t c" style="left:31.90px;top:447.86px;font-size:16px;color:#000;transform:scaleX(0.9750);">12/07/2019</span>
<span class="t c" style="left:200.80px;top:447.86px;font-size:16px;color:#000;transform:scaleX(0.9950);">'41110003762</span>
<span class="t c" style="left:307.20px;top:447.86px;font-size:16px;color:#000;transform:scaleX(0.9830);">'21214334545443</span>
<span class="t c" style="left:440.00px;top:447.86px;font-size:16px;color:#000;transform:scaleX(0.9630);">US Payee</span>
<span class="t c" style="left:535.90px;top:447.86px;font-size:16px;color:#000;transform:scaleX(0.9660);">USD 78.00</span>
<span class="t c" style="left:627.90px;top:447.86px;font-size:16px;color:#000;transform:scaleX(0.9630);">Submitted</span>
<span class="t c" style="left:704.80px;top:447.86px;font-size:16px;color:#000;transform:scaleX(0.9830);">Telegraphic Transfer</span>
<span class="t c" style="left:31.90px;top:467.58px;font-size:16px;color:#000;transform:scaleX(0.9750);">12/07/2019</span>
<span class="t c" style="left:200.80px;top:467.58px;font-size:16px;color:#000;transform:scaleX(0.9950);">'41110003762</span>
<span class="t c" style="left:307.20px;top:467.58px;font-size:16px;color:#000;transform:scaleX(0.9830);">'21214334545443</span>
<span class="t c" style="left:440.00px;top:467.58px;font-size:16px;color:#000;transform:scaleX(0.9630);">US Payee</span>
<span class="t c" style="left:535.90px;top:467.58px;font-size:16px;color:#000;transform:scaleX(0.9660);">USD 23.00</span>
<span class="t c" style="left:627.90px;top:467.58px;font-size:16px;color:#000;transform:scaleX(0.9630);">Submitted</span>
<span class="t c" style="left:704.80px;top:467.58px;font-size:16px;color:#000;transform:scaleX(0.9830);">Telegraphic Transfer</span>
<span class="t c" style="left:108.53px;top:229.38px;font-size:15.5px;color:#222;">A</span>
<span class="t c" style="left:247.18px;top:229.38px;font-size:15.5px;color:#222;">B</span>
<span class="t c" style="left:365.95px;top:229.38px;font-size:15.5px;color:#222;">C</span>
<span class="t c" style="left:479.85px;top:229.38px;font-size:15.5px;color:#222;">D</span>
<span class="t c" style="left:574.23px;top:229.38px;font-size:15.5px;color:#222;">E</span>
<span class="t c" style="left:658.67px;top:229.38px;font-size:15.5px;color:#222;">F</span>
<span class="t c" style="left:771.62px;top:229.38px;font-size:15.5px;color:#217346;">G</span>
<span class="t c" style="left:886.15px;top:229.38px;font-size:15.5px;color:#222;">H</span>
<span class="t c" style="left:965.45px;top:229.38px;font-size:15.5px;color:#222;">I</span>
<span class="t c" style="left:9.29px;top:249.78px;font-size:15.5px;color:#222;">1</span>
<span class="t c" style="left:9.29px;top:269.50px;font-size:15.5px;color:#222;">2</span>
<span class="t c" style="left:9.29px;top:289.22px;font-size:15.5px;color:#222;">3</span>
<span class="t c" style="left:9.29px;top:308.94px;font-size:15.5px;color:#222;">4</span>
<span class="t c" style="left:9.29px;top:328.66px;font-size:15.5px;color:#222;">5</span>
<span class="t c" style="left:9.29px;top:348.38px;font-size:15.5px;color:#222;">6</span>
<span class="t c" style="left:9.29px;top:368.10px;font-size:15.5px;color:#222;">7</span>
<span class="t c" style="left:9.29px;top:387.82px;font-size:15.5px;color:#222;">8</span>
<span class="t c" style="left:9.29px;top:407.54px;font-size:15.5px;color:#222;">9</span>
<span class="t c" style="left:4.98px;top:427.26px;font-size:15.5px;color:#222;">10</span>
<span class="t c" style="left:5.55px;top:446.98px;font-size:15.5px;color:#222;">11</span>
<span class="t c" style="left:4.98px;top:466.70px;font-size:15.5px;color:#222;">12</span>
<span class="t c" style="left:4.98px;top:486.42px;font-size:15.5px;color:#222;">13</span>
<span class="t c" style="left:4.98px;top:506.14px;font-size:15.5px;color:#222;">14</span>
</body></html>
